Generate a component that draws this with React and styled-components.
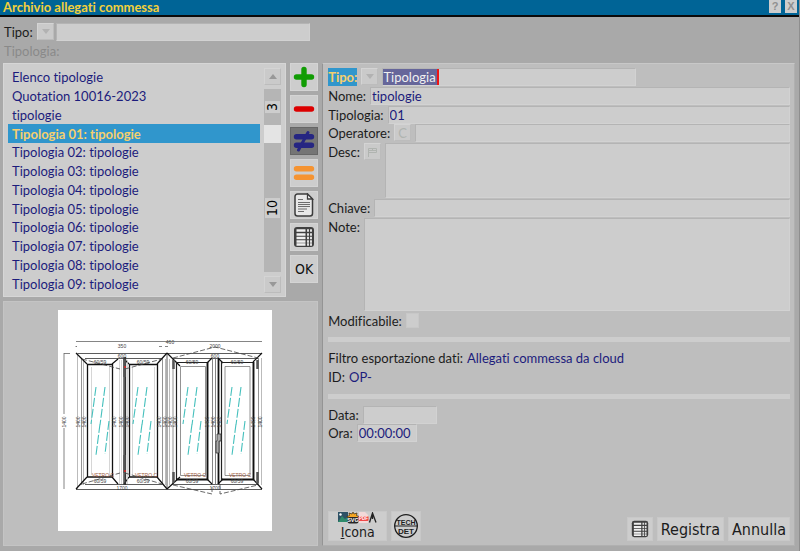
import React, { useState } from "react";
import styled, { createGlobalStyle } from "styled-components";

const GlobalStyle = createGlobalStyle`
  * {
    box-sizing: border-box;
  }

  body {
    margin: 0;
    background: #a9a9a9;
    color: #1c1c1c;
    font-family: Lato, "Open Sans", sans-serif;
    font-size: 13px;
    font-variant-ligatures: none;
  }

  button, input, textarea {
    margin: 0;
    font: inherit;
    font-variant-ligatures: none;
    color: inherit;
  }
`;

const items = [
  "Elenco tipologie",
  "Quotation 10016-2023",
  "tipologie",
  "Tipologia 01: tipologie",
  "Tipologia 02: tipologie",
  "Tipologia 03: tipologie",
  "Tipologia 04: tipologie",
  "Tipologia 05: tipologie",
  "Tipologia 06: tipologie",
  "Tipologia 07: tipologie",
  "Tipologia 08: tipologie",
  "Tipologia 09: tipologie",
];

const PlusIcon = () => (
  <svg width="22" height="22" viewBox="0 0 22 22" stroke="#119c04" strokeWidth="5.4" strokeLinecap="round">
    <path d="M11 3.5v15M3.5 11h15" />
  </svg>
);

const MinusIcon = () => (
  <svg width="22" height="22" viewBox="0 0 22 22" stroke="#dc0000" strokeWidth="5.4" strokeLinecap="round">
    <path d="M3.5 11h15" />
  </svg>
);

const NotEqualIcon = () => (
  <svg width="22" height="22" viewBox="0 0 22 22" stroke="#262682" strokeWidth="5.4" strokeLinecap="round">
    <path d="M3.5 6.800h15M3.5 15.200h15" />
    <path d="M15 2.500L5.500 20" strokeWidth="3" />
  </svg>
);

const EqualIcon = () => (
  <svg width="22" height="22" viewBox="0 0 22 22" stroke="#f59331" strokeWidth="5.4" strokeLinecap="round">
    <path d="M3.5 6.800h15M3.5 15.200h15" />
  </svg>
);

const DocIcon = () => (
  <svg width="22" height="24" viewBox="0 0 22 24" fill="none">
    <path d="M4.5 1h10l5 5v14.500a2.500 2.500 0 0 1-2.500 2.500h-12.500a2.500 2.500 0 0 1-2.500-2.500v-17a2.500 2.500 0 0 1 2.500-2.500z" fill="#e8e8e8" stroke="#3c3c3c" strokeWidth="1.500" />
    <path d="M14.500 1v5h5z" fill="#fff" stroke="#3c3c3c" strokeWidth="1.300" />
    <path d="M5 6.500h5M5 9.500h12M5 11.500h12M5 13.500h12M5 16h9M5 18.500h6" stroke="#6e6e6e" />
  </svg>
);

const TableIcon = ({ size = 22 }) => (
  <svg width={size} height={size} viewBox="0 0 22 22">
    <rect x="1" y="1" width="20" height="20" rx="3" fill="#404040" />
    <path d="M3.500 4.500h9M3.500 8.500h9M3.500 12h9M3.500 15.500h9M3.500 18.500h9" stroke="#f0f0f0" strokeWidth="2.400" />
    <path d="M14 4.500h2M14 8.500h2M14 12h2M14 15.500h2M14 18.500h2M17 4.500h2M17 8.500h2M17 12h2M17 15.500h2M17 18.500h2" stroke="#e0e0e0" strokeWidth="2.400" />
  </svg>
);

const FilesIcon = () => (
  <svg width="40" height="12" viewBox="0 0 40 12">
    <rect x="0" y="0" width="10" height="10" fill="#2e5266" />
    <path d="M0 10L4 4l3 3 3-2v5z" fill="#2f8b6b" />
    <circle cx="2.500" cy="2.500" r="1.200" fill="#fff" />
    <path d="M15 0l1 2 3-1-.5 2.500 2.500 1-2.500 2h-8l-1.500-2 2.500-1-.5-2.500 3 1z" fill="#f6a623" stroke="#3a2a10" strokeWidth=".7" />
    <rect x="9.500" y="5" width="11" height="6.500" rx="2" fill="#262626" />
    <text x="15" y="10.300" fontSize="5.500" fontWeight="700" textAnchor="middle" fill="#fff" fontFamily="Liberation Sans">SVG</text>
    <path d="M21 0h6l3 3v8h-9z" fill="#f3d9d9" />
    <rect x="20.500" y="4" width="10" height="5" rx="1" fill="#f04848" />
    <text x="25.500" y="8.300" fontSize="4.500" fontWeight="700" textAnchor="middle" fill="#fff" fontFamily="Liberation Sans">PDF</text>
    <path d="M31.500 10.500L34.500 1l3.500 9.500M34.500 1v6" fill="none" stroke="#222" strokeWidth="1.300" />
  </svg>
);

const TechDetIcon = () => (
  <svg width="26" height="26" viewBox="0 0 26 26" fill="none" stroke="#1e1e1e">
    <circle cx="13" cy="13" r="11.300" strokeWidth="1.300" />
    <path d="M1 13h24" />
    <g stroke="none" fill="#1e1e1e" fontFamily="Liberation Sans" fontWeight="700" textAnchor="middle">
      <text x="13" y="11.600" fontSize="7">TECH</text>
      <text x="13" y="20.800" fontSize="8">DET</text>
    </g>
  </svg>
);

const Arrow = ({ up, color = "#989898" }) => (
  <svg width="8" height="5" viewBox="0 0 8 5">
    <path d={up ? "M0 5L4 0l4 5z" : "M0 0h8L4 5z"} fill={color} />
  </svg>
);

const FlagIcon = () => (
  <svg width="10" height="10" viewBox="0 0 10 10" fill="none" stroke="#b0b4b0">
    <path d="M1.500 10V1.500h8v4h-8M1.500 3.500h8M5.500 1.500v2" />
  </svg>
);

const Glass = ({ x }) => (
  <path
    d={`M${x} 77l-5 37M${x + 9} 77l-5 38M${x + 4} 114l-4 31M${x + 13} 111l-4 33`}
    stroke="#46c0bd"
    strokeWidth="1.100"
    strokeDasharray="9 2"
  />
);

// technical drawing: two casements on the left, two on the right
const WindowDrawing = () => (
  <svg width="214" height="221" viewBox="0 0 214 221" fill="none" stroke="#333" strokeWidth=".8" role="img" aria-label="Anteprima tipologia">
    <path d="M18 31.500h186M18 36v1M6 43.500h6M6 43v61M6 118v61M18 36.500h1M101 36.500h3M107 36.500h3" stroke="#666" />
    <path d="M18 43.500h186M18 179.500h186M109 43v136M27 48.500h77M27 174.500h77M114 48.500h86M114 174.500h86" />
    <path d="M19.500 43v136M203.500 48v127M25.500 49v126M107.500 49v126M111.500 49v126" stroke="#aaa" />
    <path d="M23.500 48v127M104.500 48v127M115 48v127M200.500 48v127" stroke="#777" />
    <path d="M18 43l11 11M109 43l-10 11M18 179l11-12M109 179l-10-12M109 43l13 13M204 43l-9 9M109 179l13-12M204 179l-9-10M60 49l-6 5M66 49l5 5M60 174l-6-7M66 174l5-7M154 48l-5 5M160 48l5 5M154 174l-5-5M160 174l5-5" stroke="#111" strokeWidth="1.200" />
    <path d="M29.500 54.500h25v112.500h-25zM71.500 54.500h28v112.500h-28z" stroke="#111" strokeWidth="1.300" />
    <path d="M33.500 57v108M51.500 57v108M74.500 57v108M96.500 57v108M61.500 50v124M63.500 50v124M69.500 50v124" stroke="#ccc" />
    <path d="M66 47v128M67.500 47v128" stroke="#333" strokeWidth="1.300" />
    <path d="M118.500 52.500h31v117h-31zM163.500 52.500h32v117h-32z" stroke="#222" strokeWidth="1.200" />
    <path d="M122.500 56.500h25v109h-25zM167 56.500h25v109h-25z" stroke="#777" />
    <path d="M149.500 52v118M195.500 52v118M160.500 49v125M118 169.500h32M164 169.500h32" stroke="#111" strokeWidth="1.800" />
    <path d="M154.500 48v127M157.500 48v127" stroke="#666" />
    <path d="M24 49l38 10M67 59l37-10M24 174l38-11M67 163l37 11M115 48l42-11 43 11M115 175l39 9v-10M162 174v10l38-9" strokeDasharray="5 2" stroke="#444" />
    <path d="M66.500 49v18M66.500 145v18M115.500 50v9M199.500 50v9M115.500 162v11M199.500 162v11" stroke="#555" strokeWidth="2.500" />
    <path d="M159 124h4v7h-2v12h-3v-12h1z" fill="#aaa" />
    <path d="M66 57h2M66 161h2" stroke="#d22" strokeWidth="1.500" />
    <Glass x={38} />
    <Glass x={80} />
    <Glass x={130} />
    <Glass x={174} />
    <g stroke="none" fill="#444" fontSize="5" textAnchor="middle" fontFamily="Liberation Sans">
      <text x="64" y="38">350</text>
      <text x="112" y="34">460</text>
      <text x="157" y="38">2000</text>
      {[64, 157].map((x) => (
        <React.Fragment key={x}>
          <text x={x} y="48">600</text>
          <text x={x} y="180">1700</text>
        </React.Fragment>
      ))}
      {[42, 85, 134, 179].map((x) => (
        <React.Fragment key={x}>
          <text x={x} y="54">60/59</text>
          <text x={x} y="173">60/59</text>
          <text x={x + 3} y="167" fill="#a05a40">VETRO C</text>
        </React.Fragment>
      ))}
      {[8, 22, 28, 58, 65, 71, 103, 109, 114, 119, 151, 157, 163, 197, 204].map((x) => (
        <text key={x} transform={`translate(${x} 112) rotate(-90)`}>1400</text>
      ))}
    </g>
  </svg>
);

const App = () => {
  const [selected, setSelected] = useState(3);

  return (
    <>
      <GlobalStyle />
      <Window>
        <TitleBar>
          <h1>Archivio allegati commessa</h1>
          <TitleButton aria-label="Aiuto">?</TitleButton>
          <TitleButton aria-label="Chiudi">X</TitleButton>
        </TitleBar>
        <Filters>
          <FilterRow>
            <label htmlFor="filter-tipo">Tipo:</label>
            <SmallButton aria-label="Scegli tipo"><Arrow color="#b2b2b2" /></SmallButton>
            <Input id="filter-tipo" $width="254px" />
          </FilterRow>
          <FilterRow $disabled>Tipologia:</FilterRow>
        </Filters>
        <Main>
          <Left>
            <ListArea>
              <ListPanel>
                <List>
                  {items.map((item, i) => (
                    <li key={item}>
                      <Item $active={i === selected} onClick={() => setSelected(i)}>{item}</Item>
                    </li>
                  ))}
                </List>
                <Scroll>
                  <SmallButton aria-label="Su"><Arrow up /></SmallButton>
                  <Track>
                    <Mark>3</Mark>
                    <Thumb />
                    <Spacer />
                    <Mark>10</Mark>
                    <Spacer />
                  </Track>
                  <SmallButton aria-label="Giù"><Arrow /></SmallButton>
                </Scroll>
              </ListPanel>
              <Tools>
                <ToolButton aria-label="Aggiungi"><PlusIcon /></ToolButton>
                <ToolButton aria-label="Elimina"><MinusIcon /></ToolButton>
                <ToolButton aria-label="Modifica" $pressed><NotEqualIcon /></ToolButton>
                <ToolButton aria-label="Duplica"><EqualIcon /></ToolButton>
                <ToolButton aria-label="Documento"><DocIcon /></ToolButton>
                <ToolButton aria-label="Tabella"><TableIcon /></ToolButton>
                <ToolButton>OK</ToolButton>
              </Tools>
            </ListArea>
            <Preview>
              <Sheet><WindowDrawing /></Sheet>
            </Preview>
          </Left>
          <Panel>
            <Form>
              <Field>
                <ActiveLabel htmlFor="tipo">Tipo:</ActiveLabel>
                <SmallButton type="button" aria-label="Scegli tipo"><Arrow color="#b2b2b2" /></SmallButton>
                <FieldBox>
                  <SelectedInput id="tipo" defaultValue="Tipologia" />
                </FieldBox>
              </Field>
              <Field>
                <label htmlFor="nome">Nome:</label>
                <Input id="nome" defaultValue="tipologie" />
              </Field>
              <Field>
                <label htmlFor="tipologia">Tipologia:</label>
                <Input id="tipologia" defaultValue="01" />
              </Field>
              <Field>
                <label htmlFor="operatore">Operatore:</label>
                <SmallButton type="button" aria-label="Operatore corrente">C</SmallButton>
                <Input id="operatore" />
              </Field>
              <Field $rows={3}>
                <label htmlFor="desc">Desc:</label>
                <SmallButton type="button" aria-label="Lingua"><FlagIcon /></SmallButton>
                <TextArea id="desc" />
              </Field>
              <Field>
                <label htmlFor="chiave">Chiave:</label>
                <Input id="chiave" />
              </Field>
              <Field $rows={5}>
                <label htmlFor="note">Note:</label>
                <TextArea id="note" />
              </Field>
              <Field>
                <label htmlFor="modificabile">Modificabile:</label>
                <Check id="modificabile" type="checkbox" />
              </Field>
              <Divider />
              <Field>
                <span>Filtro esportazione dati:</span>
                <Value>Allegati commessa da cloud</Value>
              </Field>
              <Field>
                <span>ID:</span>
                <Value>OP-</Value>
              </Field>
              <Divider />
              <Field>
                <label htmlFor="data">Data:</label>
                <Input id="data" $width="74px" />
              </Field>
              <Field>
                <label htmlFor="ora">Ora:</label>
                <Input id="ora" $width="60px" defaultValue="00:00:00" />
              </Field>
            </Form>
            <Footer>
              <IconaButton>
                <FilesIcon />
                <span><u>I</u>cona</span>
              </IconaButton>
              <SquareButton aria-label="Tech Det"><TechDetIcon /></SquareButton>
              <Spacer />
              <FootButton aria-label="Tabella"><TableIcon size={18} /></FootButton>
              <FootButton>Registra</FootButton>
              <FootButton>Annulla</FootButton>
            </Footer>
          </Panel>
        </Main>
      </Window>
    </>
  );
};

const Window = styled.div`
  min-height: 100vh;
  display: flex;
  flex-direction: column;
  background: #a9a9a9;
  border-right: 1px solid #8e8e8e;
`;

const TitleBar = styled.header`
  display: flex;
  align-items: flex-start;
  gap: 4px;
  padding: 0 2px 0 3px;
  background: #006496;
  border-bottom: 2px solid #0a0a0a;

  h1 {
    flex: 1;
    margin: 0;
    font-size: 13px;
    line-height: 15px;
    font-weight: 700;
    color: #f2d03c;
  }
`;

const TitleButton = styled.button`
  width: 12px;
  height: 13px;
  padding: 0;
  border: 0;
  background: #cdcdcd;
  color: #909090;
  font-family: "Liberation Sans", sans-serif;
  font-size: 11px;
  line-height: 13px;
  font-weight: 700;
`;

const Filters = styled.div`
  padding: 5px 4px 3px;
`;

const FilterRow = styled.div`
  display: flex;
  align-items: center;
  height: 19px;
  gap: 2px;
  color: ${(props) => (props.$disabled ? "#898989" : "inherit")};

  label {
    width: 31px;
  }
`;

const Main = styled.main`
  flex: 1;
  display: grid;
  grid-template-columns: minmax(0, 2fr) minmax(0, 3fr);
  gap: 4px;
  padding: 0 4px 5px 3px;
`;

const Left = styled.div`
  display: flex;
  flex-direction: column;
  gap: 4px;
`;

const ListArea = styled.div`
  display: flex;
  gap: 4px;
`;

const ListPanel = styled.section`
  flex: 1;
  display: flex;
  gap: 4px;
  padding: 4px 4px 3px;
  background: #cdcdcd;
  border: 1px solid #d6d6d6;
`;

const List = styled.ul`
  flex: 1;
  display: grid;
  grid-template-rows: repeat(12, 1fr);
  height: 225px;
  margin: 0;
  padding: 0;
  list-style: none;
`;

const Item = styled.button`
  display: block;
  width: 100%;
  height: 100%;
  padding: 0 4px;
  border: 0;
  text-align: left;
  line-height: 18px;
  font-weight: ${(props) => (props.$active ? 700 : 400)};
  color: ${(props) => (props.$active ? "#f5cf6e" : "#1c1c7c")};
  background: ${(props) => (props.$active ? "#3096cc" : "transparent")};
`;

const Scroll = styled.div`
  width: 17px;
  display: flex;
  flex-direction: column;
  gap: 4px;
`;

const SmallButton = styled.button`
  flex: none;
  width: 17px;
  height: 17px;
  display: flex;
  align-items: center;
  justify-content: center;
  padding: 0;
  border: 1px solid;
  border-color: #d4d4d4 #bcbcbc #bcbcbc #d4d4d4;
  background: #cacaca;
  color: #b0b4b0;
`;

const Track = styled.div`
  flex: 1;
  display: flex;
  flex-direction: column;
  align-items: center;
  padding-top: 12px;
  background: #b5b5b5;
`;

const Mark = styled.span`
  width: 15px;
  padding: 2px 0;
  writing-mode: vertical-rl;
  transform: rotate(180deg);
  background: #cdcdcd;
  color: #000;
  font-family: "DejaVu Sans Condensed", "DejaVu Sans", sans-serif;
  font-size: 14px;
  line-height: 15px;
`;

const Thumb = styled.div`
  width: 100%;
  height: 18px;
  margin-top: 12px;
  background: #e4e4e4;
`;

const Spacer = styled.div`
  flex: 1;
`;

const Tools = styled.div`
  display: flex;
  flex-direction: column;
  gap: 4px;
`;

const ToolButton = styled.button`
  width: 28px;
  height: 28px;
  display: flex;
  align-items: center;
  justify-content: center;
  padding: 0;
  border: 1px solid ${(props) => (props.$pressed ? "#666" : "#d4d4d4")};
  background: ${(props) => (props.$pressed ? "#757575" : "#cdcdcd")};
  color: #111;
  font-family: "DejaVu Sans Condensed", "DejaVu Sans", sans-serif;
  font-size: 14px;
`;

const Preview = styled.section`
  flex: 1;
  display: flex;
  align-items: flex-start;
  justify-content: center;
  padding: 8px 0 14px 8px;
  background: #bebebe;
  border: 1px solid #c4c4c4;
`;

const Sheet = styled.div`
  background: #fff;

  svg {
    display: block;
  }
`;

const Panel = styled.section`
  display: flex;
  flex-direction: column;
  justify-content: space-between;
  padding: 4px 4px 4px 5px;
  background: #bebebe;
  border: 1px solid;
  border-color: #c8c8c8 #b0b0b0 #b0b0b0 #949494;
`;

const Form = styled.form`
  display: grid;
  grid-template-rows: repeat(20, 1fr);
  height: 375px;
`;

const Field = styled.div`
  grid-row: span ${(props) => props.$rows || 1};
  display: flex;
  align-items: flex-start;
  gap: 4px;
  min-height: 0;
  padding-bottom: 1px;
  line-height: 18px;
`;

const ActiveLabel = styled.label`
  background: #3096cc;
  color: #f5cf6e;
  font-weight: 700;
`;

const inputLook = `
  min-width: 0;
  padding: 0 1px;
  border: 1px solid;
  border-color: #b4b4b4 #d2d2d2 #d2d2d2 #b4b4b4;
  border-radius: 0;
  background: #cdcdcd;
  color: #1c1c7c;
  outline: none;
`;

const Input = styled.input`
  ${inputLook}
  flex: ${(props) => (props.$width ? "none" : "1")};
  width: ${(props) => props.$width || "auto"};
  height: 18px;
`;

const FieldBox = styled.div`
  ${inputLook}
  width: 254px;
  height: 18px;
  padding: 0;
`;

const SelectedInput = styled.input`
  display: block;
  width: 56px;
  height: 16px;
  padding: 0;
  border: 0;
  border-right: 2px solid #f01414;
  background: #66669a;
  color: #f0f0f0;
  outline: none;
`;

const TextArea = styled.textarea`
  ${inputLook}
  flex: 1;
  height: 100%;
  resize: none;
`;

const Check = styled.input`
  appearance: none;
  width: 13px;
  height: 15px;
  margin: 1px 0 0;
  border: 1px solid #c8c8c8;
  background: #cdcdcd;
`;

const Value = styled.span`
  color: #1c1c7c;
`;

const Divider = styled.hr`
  width: 100%;
  height: 5px;
  margin: 0;
  align-self: center;
  border: 0;
  background: #cdcdcd;
`;

const Footer = styled.footer`
  display: flex;
  align-items: flex-end;
  gap: 4px;
`;

const FootButton = styled.button`
  height: 24px;
  display: flex;
  align-items: center;
  padding: 0 3px;
  border: 1px solid #c8c8c8;
  background: #cdcdcd;
  color: #1c1c1c;
  font-family: "DejaVu Sans Condensed", "DejaVu Sans", sans-serif;
  font-size: 16px;
`;

const SquareButton = styled(FootButton)`
  width: 30px;
  height: 30px;
  padding: 1px;
`;

const IconaButton = styled(FootButton)`
  width: 59px;
  height: 30px;
  flex-direction: column;
  padding: 0;
  font-size: 14px;
  line-height: 16px;
`;

export default App;
